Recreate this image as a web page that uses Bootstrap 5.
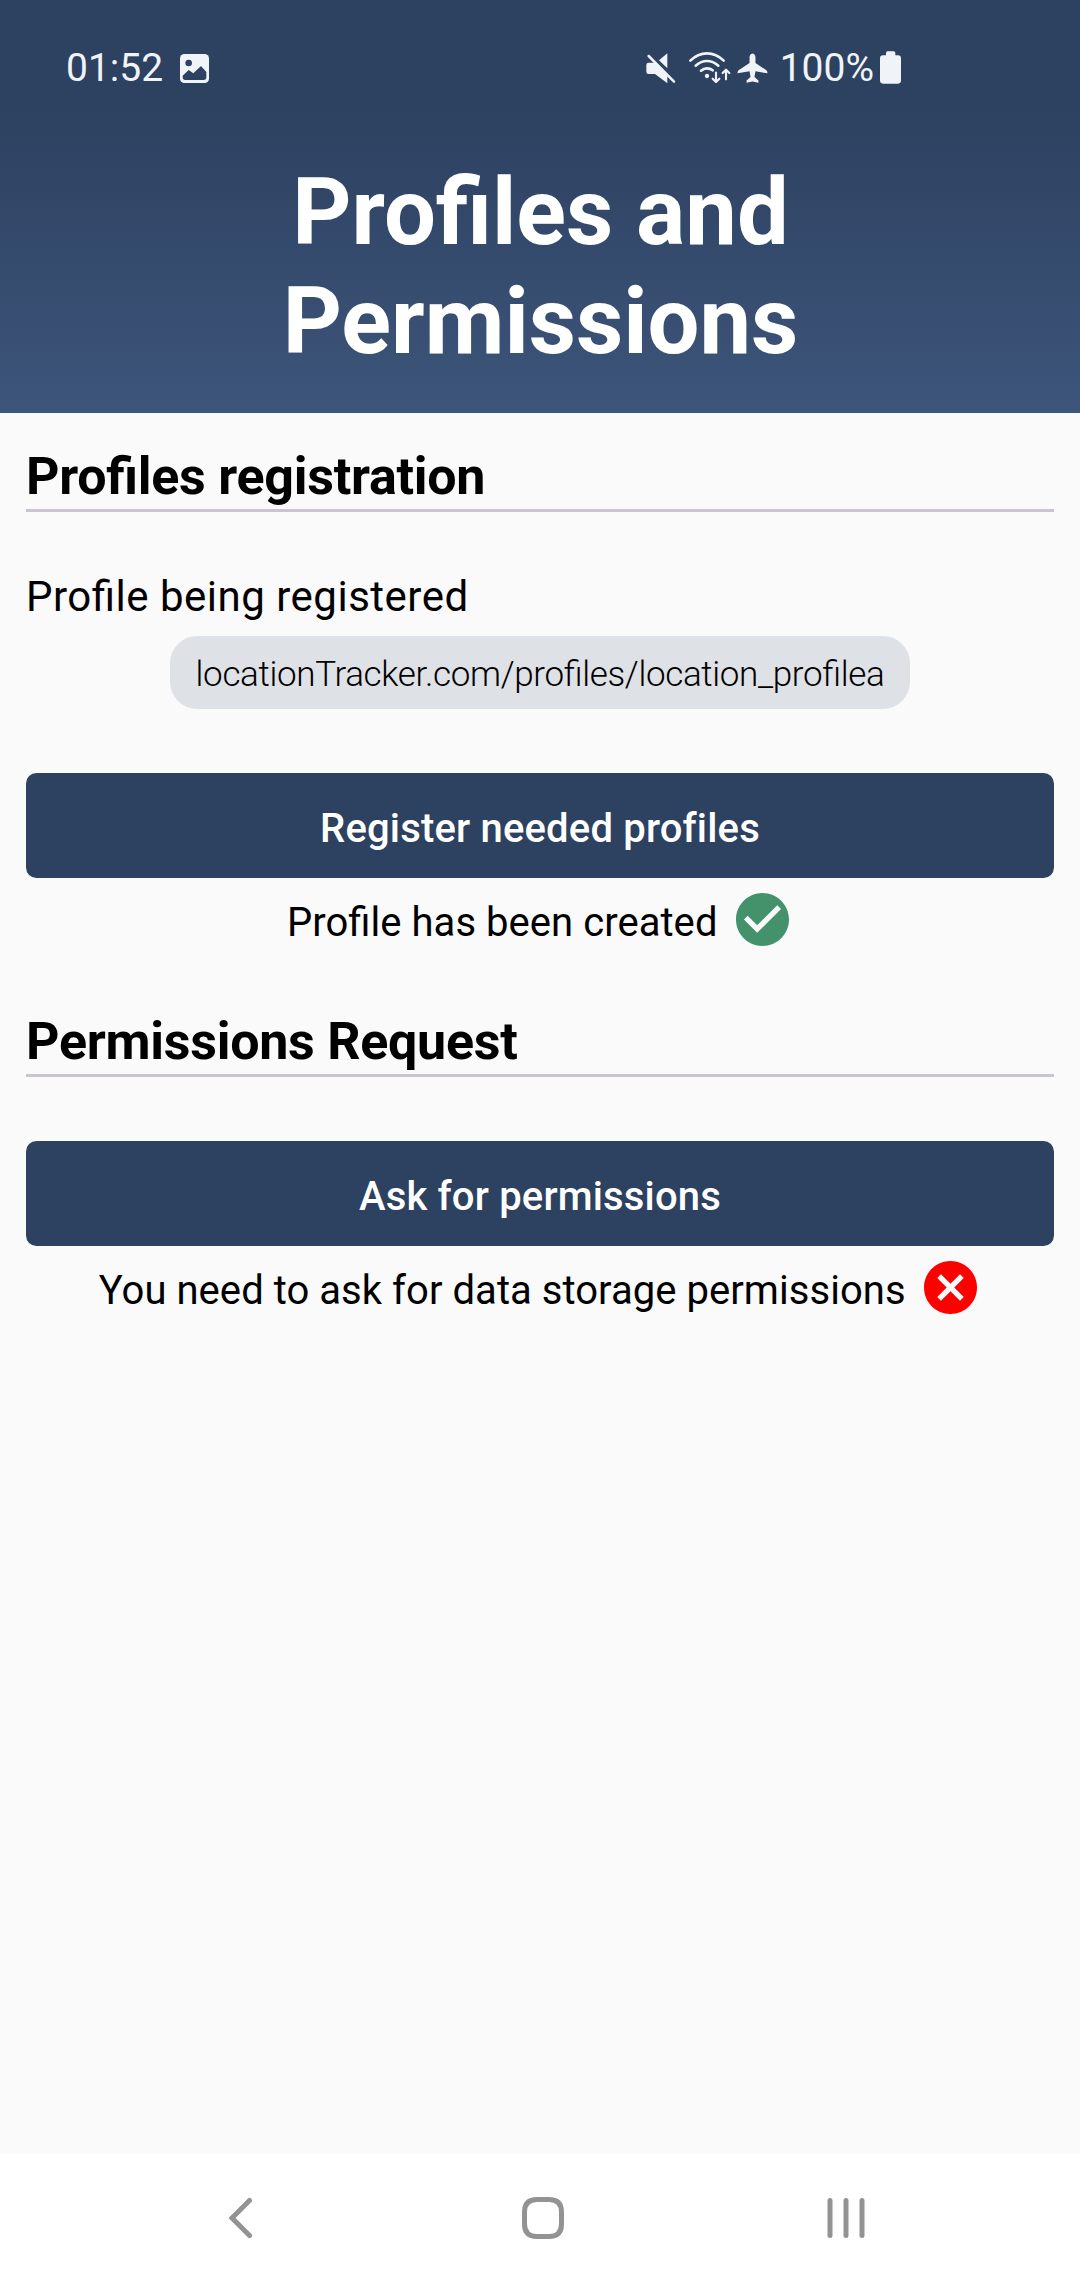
<!DOCTYPE html>
<html lang="en">
<head>
<meta charset="utf-8">
<meta name="viewport" content="width=device-width, initial-scale=1">
<title>Profiles and Permissions</title>
<link href="https://cdn.jsdelivr.net/npm/bootstrap@5.3.0/dist/css/bootstrap.min.css" rel="stylesheet">
<style>
  body { font-family: Roboto, "Liberation Sans", sans-serif; color: #000; background: #fafafa; font-feature-settings: "liga" 1; }
  svg { flex: none; display: block; }
  .screen { width: 1080px; height: 2280px; overflow: hidden; }
  .app-header { height: 413px; background: linear-gradient(#2d4160 26%, #3d557b 100%); color: #fff; }
  .status-bar { height: 134px; padding: 0 178px 0 66px; color: #f0f3f8; font-size: 39px; line-height: 1; }
  .status-bar span { padding-top: 3px; }
  .picture-icon { margin: 3px 0 0 17px; }
  .wifi-icon { margin-left: 11px; }
  .plane-icon { margin: 0 11px 0 4px; }
  .battery-icon { margin-left: 5px; }
  .app-title { width: 700px; font-size: 92px; line-height: 109px; font-weight: 700; padding: 24px 0 0 1px; }
  .content { padding: 0 26px; }
  .section-title { height: 99px; padding-top: 34px; border-bottom: 3px solid #cac4d0; font-size: 52px; line-height: 60px; font-weight: 700; letter-spacing: -.27px; }
  .field-label { padding-top: 61px; height: 124px; font-size: 42px; line-height: 48px; letter-spacing: .5px; }
  .url-chip { width: 740px; height: 73px; padding-top: 5px; border-radius: 27px; background: #dee1e6; font-size: 35px; font-weight: 300; letter-spacing: -.34px; }
  .btn-app { --bs-btn-color: #fff; --bs-btn-bg: #2d4160; --bs-btn-hover-bg: #2d4160; --bs-btn-hover-color: #fff; height: 105px; margin-top: 64px; border: 0; border-radius: 10.5px; font-size: 40px; font-weight: 500; letter-spacing: .17px; padding: 6px 0 0; }
  .status-line { height: 53px; margin-top: 15px; padding-right: 4.6px; font-size: 40px; line-height: 53px; letter-spacing: .05px; gap: 18px; }
  .status-line span { padding-top: 3px; }
  .status-line + .section-title { margin-top: 32px; }
  .nav-keys { height: 126px; padding: 2px 215px 0 227px; background: #fff; color: #939393; }
</style>
</head>
<body>
<div class="screen d-flex flex-column">
  <header class="app-header d-flex flex-column align-items-center">
    <div class="status-bar w-100 d-flex align-items-center">
      <span>01:52</span>
      <svg class="picture-icon" width="29" height="29" viewBox="0 0 87 87"><rect width="87" height="87" rx="13" fill="currentColor"/><circle cx="26" cy="27" r="10" fill="#2d4160"/><path d="M8 65L26 48 40 58 63 36 79 54V70Q79 78 71 78H16Q8 78 8 70z" fill="#2d4160"/></svg>
      <svg class="ms-auto" width="32" height="34" viewBox="45 60 96 102"><path d="M49 105Q49 98 56 98H76L112 134V160L75 132H56Q49 132 49 125zM87 91L112 70V115z" fill="currentColor"/><path d="M56 78L132 155" stroke="currentColor" stroke-width="7.500" stroke-linecap="round"/></svg>
      <svg class="wifi-icon" width="44" height="34" viewBox="174 60 132 102" fill="none" stroke="currentColor" stroke-width="8" stroke-linecap="round" stroke-linejoin="round"><path d="M181 92Q203 70 231 70T281 92M197 107Q213 93 231 93T265 107M213 122Q221 115 231 115T248 121"/><path d="M258 128V155M248 146L258 156 268 146M288 148V120M278 129L288 119 298 129" stroke-width="6.500"/><circle cx="231" cy="138" r="6.500" fill="currentColor" stroke="none"/></svg>
      <svg class="plane-icon" width="33" height="34" viewBox="318 60 100 102"><path d="M368 70C375 70 377 77 377 83V99L409 120Q414 123 413 130L377 124 374 141 386 152V159L368 155 350 159V152L362 141 359 124 323 130Q322 123 327 120L359 99V83C359 77 361 70 368 70Z" fill="currentColor"/></svg>
      <span>100%</span>
      <svg class="battery-icon" width="23" height="34" viewBox="747 60 69 102"><path d="M773 64H791Q796 64 796 69V76H804Q813 76 813 85V151Q813 161 804 161H759Q750 161 750 151V85Q750 76 759 76H768V69Q768 64 773 64z" fill="currentColor"/></svg>
    </div>
    <h1 class="app-title text-center mb-0">Profiles and Permissions</h1>
  </header>
  <main class="content flex-grow-1">
    <h2 class="section-title mb-0">Profiles registration</h2>
    <div class="field-label">Profile being registered</div>
    <div class="url-chip d-flex align-items-center justify-content-center mx-auto">locationTracker.com/profiles/location_profilea</div>
    <button type="button" class="btn btn-app w-100">Register needed profiles</button>
    <div class="status-line d-flex justify-content-center">
      <span>Profile has been created</span>
      <svg width="53" height="53" viewBox="2 2 20 20" fill="#43926c"><path d="M12 2C6.480 2 2 6.480 2 12s4.480 10 10 10 10-4.480 10-10S17.520 2 12 2zm-2 15l-5-5 1.410-1.410L10 14.170l7.590-7.590L19 8l-9 9z"/></svg>
    </div>
    <h2 class="section-title mb-0">Permissions Request</h2>
    <button type="button" class="btn btn-app w-100">Ask for permissions</button>
    <div class="status-line d-flex justify-content-center">
      <span>You need to ask for data storage permissions</span>
      <svg width="53" height="53" viewBox="2 2 20 20" fill="#f00"><path d="M12 2C6.470 2 2 6.470 2 12s4.470 10 10 10 10-4.470 10-10S17.530 2 12 2zm5 13.590L15.590 17 12 13.410 8.410 17 7 15.590 10.590 12 7 8.410 8.410 7 12 10.590 15.590 7 17 8.410 13.410 12 17 15.590z"/></svg>
    </div>
  </main>
  <nav class="nav-keys d-flex align-items-center justify-content-between">
    <svg width="31" height="42" viewBox="0 0 31 42"><path d="M22.500 3.500L5 21 22.500 38.500" fill="none" stroke="currentColor" stroke-width="5" stroke-linecap="round"/></svg>
    <svg width="42" height="42" viewBox="0 0 42 42"><path d="M21 2.500H27Q39.500 2.500 39.500 15V27Q39.500 39.500 27 39.500H15Q2.500 39.500 2.500 27V15Q2.500 2.500 15 2.500Z" fill="none" stroke="currentColor" stroke-width="5"/></svg>
    <svg width="38" height="42" viewBox="0 0 38 42"><path d="M3 3.500V38.500M19 3.500V38.500M35 3.500V38.500" stroke="currentColor" stroke-width="5" stroke-linecap="round"/></svg>
  </nav>
</div>
<script src="https://cdn.jsdelivr.net/npm/bootstrap@5.3.0/dist/js/bootstrap.bundle.min.js"></script>
</body>
</html>
